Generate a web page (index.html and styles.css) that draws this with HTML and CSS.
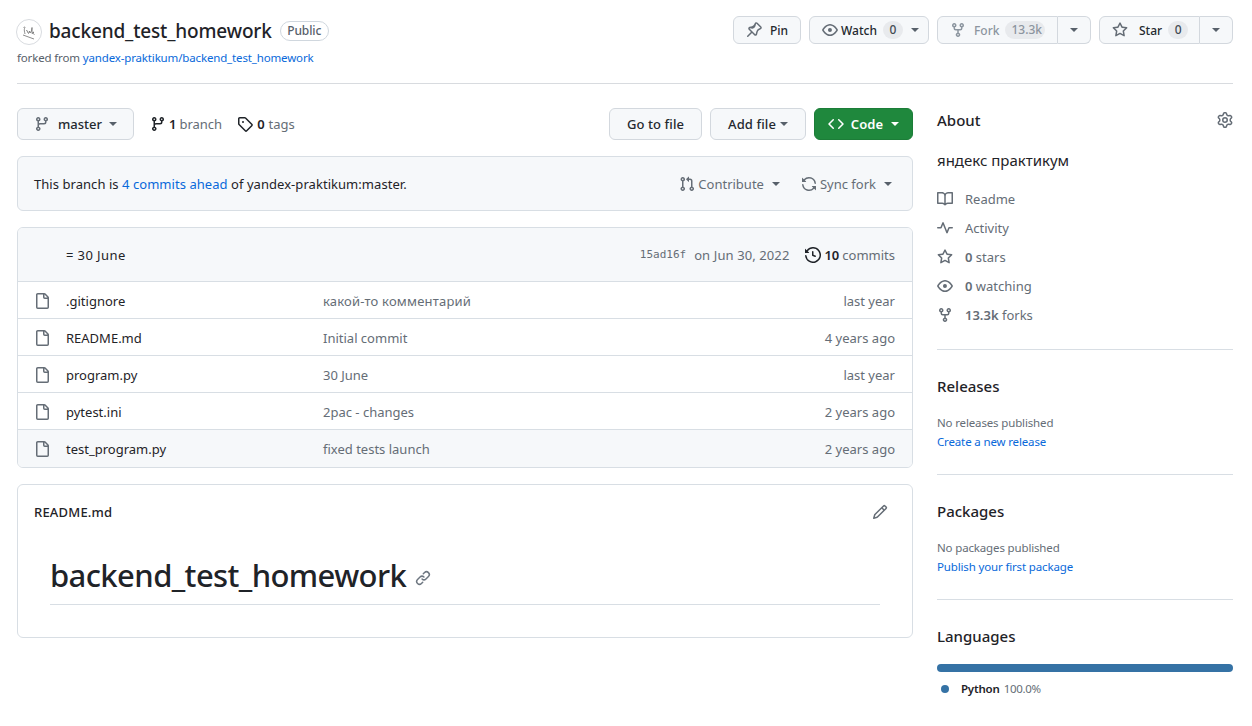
FILE: index.html
```html
<!DOCTYPE html>
<html lang="en">
<head>
    <meta charset="UTF-8">
    <meta name="viewport" content="width=device-width, initial-scale=1.0">
    <title>backend_test_homework</title>
    <link rel="stylesheet" href="styles.css">
</head>
<body>
    <!-- icon sprite -->
    <svg class="sprite" aria-hidden="true">
        <symbol id="i-fork" viewBox="0 0 16 16"><path d="M5 5.372v.878c0 .414.336.75.75.75h4.5a.75.75 0 0 0 .75-.75v-.878a2.25 2.25 0 1 1 1.5 0v.878a2.25 2.25 0 0 1-2.25 2.25h-1.5v2.128a2.251 2.251 0 1 1-1.5 0V8.5h-1.5A2.25 2.25 0 0 1 3.5 6.25v-.878a2.25 2.25 0 1 1 1.5 0ZM5 3.25a.75.75 0 1 0-1.5 0 .75.75 0 0 0 1.5 0Zm6.75.75a.75.75 0 1 0 0-1.5.75.75 0 0 0 0 1.5Zm-3 8.75a.75.75 0 1 0-1.5 0 .75.75 0 0 0 1.5 0Z"/></symbol>
        <symbol id="i-branch" viewBox="0 0 16 16"><path d="M9.5 3.25a2.25 2.25 0 1 1 3 2.122V6A2.5 2.5 0 0 1 10 8.5H6a1 1 0 0 0-1 1v1.128a2.251 2.251 0 1 1-1.5 0V5.372a2.25 2.25 0 1 1 1.5 0v1.836A2.493 2.493 0 0 1 6 7h4a1 1 0 0 0 1-1v-.628A2.25 2.25 0 0 1 9.5 3.25Zm-6 0a.75.75 0 1 0 1.5 0 .75.75 0 0 0-1.5 0Zm8.25-.75a.75.75 0 1 0 0 1.5.75.75 0 0 0 0-1.5ZM4.25 12a.75.75 0 1 0 0 1.5.75.75 0 0 0 0-1.5Z"/></symbol>
        <symbol id="i-tag" viewBox="0 0 16 16"><path d="M1 7.775V2.75C1 1.784 1.784 1 2.75 1h5.025c.464 0 .91.184 1.238.513l6.25 6.25a1.75 1.75 0 0 1 0 2.474l-5.026 5.026a1.75 1.75 0 0 1-2.474 0l-6.25-6.25A1.752 1.752 0 0 1 1 7.775Zm1.5 0c0 .066.026.13.073.177l6.25 6.25a.25.25 0 0 0 .354 0l5.025-5.025a.25.25 0 0 0 0-.354l-6.25-6.25a.25.25 0 0 0-.177-.073H2.75a.25.25 0 0 0-.25.25ZM6 5a1 1 0 1 1 0 2 1 1 0 0 1 0-2Z"/></symbol>
        <symbol id="i-pin" viewBox="0 0 16 16"><path d="M4.456.734a1.75 1.75 0 0 1 2.826.504l.613 1.327a3.08 3.08 0 0 0 2.084 1.707l2.454.584c1.332.317 1.8 1.972.832 2.94L11.06 10l3.72 3.72a.749.749 0 0 1-.326 1.275.749.749 0 0 1-.734-.215L10 11.06l-2.204 2.205c-.968.968-2.623.5-2.94-.832l-.584-2.454a3.08 3.08 0 0 0-1.707-2.084l-1.327-.613a1.75 1.75 0 0 1-.504-2.826L4.456.734ZM5.92 1.866a.25.25 0 0 0-.404-.072L1.794 5.516a.25.25 0 0 0 .072.404l1.328.613A4.582 4.582 0 0 1 5.73 9.63l.584 2.454a.25.25 0 0 0 .42.12l5.47-5.47a.25.25 0 0 0-.12-.42L9.63 6.73a4.583 4.583 0 0 1-3.098-2.537L5.92 1.866Z"/></symbol>
        <symbol id="i-eye" viewBox="0 0 16 16"><path d="M8 2c1.981 0 3.671.992 4.933 2.078 1.27 1.091 2.187 2.345 2.637 3.023a1.62 1.62 0 0 1 0 1.798c-.45.678-1.367 1.932-2.637 3.023C11.67 13.008 9.981 14 8 14c-1.981 0-3.671-.992-4.933-2.078C1.797 10.83.88 9.576.43 8.898a1.62 1.62 0 0 1 0-1.798c.45-.677 1.367-1.931 2.637-3.022C4.33 2.992 6.019 2 8 2ZM1.679 7.932a.12.12 0 0 0 0 .136c.411.622 1.241 1.75 2.366 2.717C5.176 11.758 6.527 12.5 8 12.5c1.473 0 2.825-.742 3.955-1.715 1.124-.967 1.954-2.096 2.366-2.717a.12.12 0 0 0 0-.136c-.412-.621-1.242-1.75-2.366-2.717C10.824 4.242 9.473 3.5 8 3.5c-1.473 0-2.825.742-3.955 1.715-1.124.967-1.954 2.096-2.366 2.717ZM8 10a2 2 0 1 1-.001-3.999A2 2 0 0 1 8 10Z"/></symbol>
        <symbol id="i-star" viewBox="0 0 16 16"><path d="M8 .25a.75.75 0 0 1 .673.418l1.882 3.815 4.21.612a.75.75 0 0 1 .416 1.279l-3.046 2.97.719 4.192a.751.751 0 0 1-1.088.791L8 12.347l-3.766 1.98a.75.75 0 0 1-1.088-.79l.72-4.194L.818 6.374a.75.75 0 0 1 .416-1.28l4.21-.611L7.327.668A.75.75 0 0 1 8 .25Zm0 2.445L6.615 5.5a.75.75 0 0 1-.564.41l-3.097.45 2.24 2.184a.75.75 0 0 1 .216.664l-.528 3.084 2.769-1.456a.75.75 0 0 1 .698 0l2.77 1.456-.53-3.084a.75.75 0 0 1 .216-.664l2.24-2.183-3.096-.45a.75.75 0 0 1-.564-.41L8 2.694Z"/></symbol>
        <symbol id="i-code" viewBox="0 0 16 16"><path d="m11.28 3.22 4.25 4.25a.75.75 0 0 1 0 1.06l-4.25 4.25a.749.749 0 0 1-1.275-.326.749.749 0 0 1 .215-.734L13.94 8l-3.72-3.72a.749.749 0 0 1 .326-1.275.749.749 0 0 1 .734.215Zm-6.56 0a.751.751 0 0 1 1.042.018.751.751 0 0 1 .018 1.042L2.06 8l3.72 3.72a.749.749 0 0 1-.326 1.275.749.749 0 0 1-.734-.215L.47 8.53a.75.75 0 0 1 0-1.06Z"/></symbol>
        <symbol id="i-pr" viewBox="0 0 16 16"><path d="M1.5 3.25a2.25 2.25 0 1 1 3 2.122v5.256a2.251 2.251 0 1 1-1.5 0V5.372A2.25 2.25 0 0 1 1.5 3.25Zm5.677-.177L9.573.677A.25.25 0 0 1 10 .854V2.5h1A2.5 2.5 0 0 1 13.5 5v5.628a2.251 2.251 0 1 1-1.5 0V5a1 1 0 0 0-1-1h-1v1.646a.25.25 0 0 1-.427.177L7.177 3.427a.25.25 0 0 1 0-.354ZM3.75 2.5a.75.75 0 1 0 0 1.5.75.75 0 0 0 0-1.5Zm0 9.5a.75.75 0 1 0 0 1.5.75.75 0 0 0 0-1.5Zm8.25.75a.75.75 0 1 0 1.5 0 .75.75 0 0 0-1.5 0Z"/></symbol>
        <symbol id="i-sync" viewBox="0 0 16 16"><path d="M1.705 8.005a.75.75 0 0 1 .834.656 5.5 5.5 0 0 0 9.592 2.97l-1.204-1.204a.25.25 0 0 1 .177-.427h3.646a.25.25 0 0 1 .25.25v3.646a.25.25 0 0 1-.427.177l-1.38-1.38A7.002 7.002 0 0 1 1.05 8.84a.75.75 0 0 1 .656-.834ZM8 2.5a5.487 5.487 0 0 0-4.131 1.869l1.204 1.204A.25.25 0 0 1 4.896 6H1.25A.25.25 0 0 1 1 5.75V2.104a.25.25 0 0 1 .427-.177l1.38 1.38A7.002 7.002 0 0 1 14.95 7.16a.75.75 0 0 1-1.49.178A5.5 5.5 0 0 0 8 2.5Z"/></symbol>
        <symbol id="i-history" viewBox="0 0 16 16"><path d="m.427 1.927 1.215 1.215a8.002 8.002 0 1 1-1.6 5.685.75.75 0 1 1 1.493-.154 6.5 6.5 0 1 0 1.18-4.458l1.358 1.358A.25.25 0 0 1 3.896 6H.25A.25.25 0 0 1 0 5.75V2.104a.25.25 0 0 1 .427-.177ZM7.75 4a.75.75 0 0 1 .75.75v2.992l2.028.812a.75.75 0 0 1-.557 1.392l-2.5-1A.751.751 0 0 1 7 8.25v-3.5A.75.75 0 0 1 7.75 4Z"/></symbol>
        <symbol id="i-file" viewBox="0 0 16 16"><path d="M2 1.75C2 .784 2.784 0 3.75 0h6.586c.464 0 .909.184 1.237.513l2.914 2.914c.329.328.513.773.513 1.237v9.586A1.75 1.75 0 0 1 13.25 16h-9.5A1.75 1.75 0 0 1 2 14.25Zm1.75-.25a.25.25 0 0 0-.25.25v12.5c0 .138.112.25.25.25h9.5a.25.25 0 0 0 .25-.25V6h-2.75A1.75 1.75 0 0 1 9 4.25V1.5Zm6.75.062V4.25c0 .138.112.25.25.25h2.688l-.011-.013-2.914-2.914-.013-.011Z"/></symbol>
        <symbol id="i-pencil" viewBox="0 0 16 16"><path d="M11.013 1.427a1.75 1.75 0 0 1 2.474 0l1.086 1.086a1.75 1.75 0 0 1 0 2.474l-8.61 8.61c-.21.21-.47.364-.756.445l-3.251.93a.75.75 0 0 1-.927-.928l.929-3.25c.081-.286.235-.547.445-.758l8.61-8.61Zm.176 4.823L9.75 4.81l-6.286 6.287a.253.253 0 0 0-.064.108l-.558 1.953 1.953-.558a.253.253 0 0 0 .108-.064Zm1.238-3.763a.25.25 0 0 0-.354 0L10.811 3.75l1.439 1.44 1.263-1.263a.25.25 0 0 0 0-.354Z"/></symbol>
        <symbol id="i-link" viewBox="0 0 16 16"><path d="m7.775 3.275 1.25-1.25a3.5 3.5 0 1 1 4.95 4.95l-2.5 2.5a3.5 3.5 0 0 1-4.95 0 .751.751 0 0 1 .018-1.042.751.751 0 0 1 1.042-.018 1.998 1.998 0 0 0 2.83 0l2.5-2.5a2.002 2.002 0 0 0-2.83-2.83l-1.25 1.25a.751.751 0 0 1-1.042-.018.751.751 0 0 1-.018-1.042Zm-4.69 9.64a1.998 1.998 0 0 0 2.83 0l1.25-1.25a.751.751 0 0 1 1.042.018.751.751 0 0 1 .018 1.042l-1.25 1.25a3.5 3.5 0 1 1-4.95-4.95l2.5-2.5a3.5 3.5 0 0 1 4.95 0 .751.751 0 0 1-.018 1.042.751.751 0 0 1-1.042.018 1.998 1.998 0 0 0-2.83 0l-2.5 2.5a1.998 1.998 0 0 0 0 2.83Z"/></symbol>
        <symbol id="i-gear" viewBox="0 0 16 16"><path d="M8 0a8.2 8.2 0 0 1 .701.031C9.444.095 9.99.645 10.16 1.29l.288 1.107c.018.066.079.158.212.224.231.114.454.243.668.386.123.082.233.09.299.071l1.103-.303c.644-.176 1.392.021 1.82.63.27.385.506.792.704 1.218.315.675.111 1.422-.364 1.891l-.814.806c-.049.048-.098.147-.088.294.016.257.016.515 0 .772-.01.147.038.246.088.294l.814.806c.475.469.679 1.216.364 1.891a7.977 7.977 0 0 1-.704 1.217c-.428.61-1.176.807-1.82.63l-1.102-.302c-.067-.019-.177-.011-.3.071a5.909 5.909 0 0 1-.668.386c-.133.066-.194.158-.211.224l-.29 1.106c-.168.646-.715 1.196-1.458 1.26a8.006 8.006 0 0 1-1.402 0c-.743-.064-1.289-.614-1.458-1.26l-.289-1.106c-.018-.066-.079-.158-.212-.224a5.738 5.738 0 0 1-.668-.386c-.123-.082-.233-.09-.299-.071l-1.103.303c-.644.176-1.392-.021-1.82-.63a8.12 8.12 0 0 1-.704-1.218c-.315-.675-.111-1.422.363-1.891l.815-.806c.05-.048.098-.147.088-.294a6.214 6.214 0 0 1 0-.772c.01-.147-.038-.246-.088-.294l-.815-.806C.635 6.045.431 5.298.746 4.623a7.92 7.92 0 0 1 .704-1.217c.428-.61 1.176-.807 1.82-.63l1.102.302c.067.019.177.011.3-.071.214-.143.437-.272.668-.386.133-.066.194-.158.211-.224l.29-1.106C6.009.645 6.556.095 7.299.03 7.53.01 7.764 0 8 0Zm-.571 1.525c-.036.003-.108.036-.137.146l-.289 1.105c-.147.561-.549.967-.998 1.189-.173.086-.34.183-.5.29-.417.278-.97.423-1.529.27l-1.103-.303c-.109-.03-.175.016-.195.045-.22.312-.412.644-.573.99-.014.031-.021.11.059.19l.815.806c.411.406.562.957.53 1.456a4.709 4.709 0 0 0 0 .582c.032.499-.119 1.05-.53 1.456l-.815.806c-.081.08-.073.159-.059.19.162.346.353.677.573.989.02.03.085.076.195.046l1.102-.303c.56-.153 1.113-.008 1.53.27.161.107.328.204.501.29.447.222.85.629.997 1.189l.289 1.105c.029.109.101.143.137.146a6.6 6.6 0 0 0 1.142 0c.036-.003.108-.036.137-.146l.289-1.105c.147-.561.549-.967.998-1.189.173-.086.34-.183.5-.29.417-.278.97-.423 1.529-.27l1.103.303c.109.029.175-.016.195-.045.22-.313.411-.644.573-.99.014-.031.021-.11-.059-.19l-.815-.806c-.411-.406-.562-.957-.53-1.456a4.709 4.709 0 0 0 0-.582c-.032-.499.119-1.05.53-1.456l.815-.806c.081-.08.073-.159.059-.19a6.464 6.464 0 0 0-.573-.989c-.02-.03-.085-.076-.195-.046l-1.102.303c-.56.153-1.113.008-1.53-.27a4.44 4.44 0 0 0-.501-.29c-.447-.222-.85-.629-.997-1.189l-.289-1.105c-.029-.11-.101-.143-.137-.146a6.6 6.6 0 0 0-1.142 0ZM11 8a3 3 0 1 1-6 0 3 3 0 0 1 6 0ZM9.5 8a1.5 1.5 0 1 0-3.001.001A1.5 1.5 0 0 0 9.5 8Z"/></symbol>
        <symbol id="i-book" viewBox="0 0 16 16"><path d="M0 1.75A.75.75 0 0 1 .75 1h4.253c1.227 0 2.317.59 3 1.501A3.743 3.743 0 0 1 11.006 1h4.245a.75.75 0 0 1 .75.75v10.5a.75.75 0 0 1-.75.75h-4.507a2.25 2.25 0 0 0-1.591.659l-.622.621a.75.75 0 0 1-1.06 0l-.622-.621A2.25 2.25 0 0 0 5.258 13H.75a.75.75 0 0 1-.75-.75Zm7.251 10.324.004-5.073-.002-2.253A2.25 2.25 0 0 0 5.003 2.5H1.5v9h3.757a3.75 3.75 0 0 1 1.994.574ZM8.755 4.75l-.004 7.322a3.752 3.752 0 0 1 1.992-.572H14.5v-9h-3.495a2.25 2.25 0 0 0-2.25 2.25Z"/></symbol>
        <symbol id="i-pulse" viewBox="0 0 16 16"><path d="M6 2c.306 0 .582.187.696.471L10 10.731l1.304-3.26A.751.751 0 0 1 12 7h3.25a.75.75 0 0 1 0 1.5h-2.742l-1.812 4.528a.751.751 0 0 1-1.392 0L6 4.77 4.696 8.03A.75.75 0 0 1 4 8.5H.75a.75.75 0 0 1 0-1.5h2.742l1.812-4.529A.751.751 0 0 1 6 2Z"/></symbol>
    </svg>

    <header class="repo-head">
        <div class="repo-title">
            <div class="title-row">
                <svg class="avatar" viewBox="0 0 26 26">
                    <circle cx="13" cy="13" r="12.5" fill="#fff" stroke="#d8dbdf"/>
                    <path d="M7.5 8.5c1-1 2-.5 1 1-.5 1.500 0 3.500.5 5.500M10 12c1-1 1.500-.5 1.500 1l1 1.500 1-2.500.5 2 1.500-2 .5-3.500v6l2-1.500-1.500 1 2 1.500M7 16l11 4" fill="none" stroke="#707070" stroke-width=".8"/>
                </svg>
                <a class="repo-name" href="#">backend_test_homework</a>
                <span class="label">Public</span>
            </div>
            <p class="forked">forked from <a href="#">yandex-praktikum/backend_test_homework</a></p>
        </div>
        <div class="repo-actions">
            <button class="btn btn-sm btn-pin"><svg class="ic"><use href="#i-pin"/></svg>Pin</button>
            <button class="btn btn-sm btn-watch"><svg class="ic"><use href="#i-eye"/></svg>Watch<span class="counter">0</span><i class="caret"></i></button>
            <div class="split split-fork">
                <button class="btn btn-sm btn-main disabled"><svg class="ic"><use href="#i-fork"/></svg>Fork<span class="counter">13.3k</span></button>
                <button class="btn btn-sm btn-more"><i class="caret"></i></button>
            </div>
            <div class="split split-star">
                <button class="btn btn-sm btn-main"><svg class="ic"><use href="#i-star"/></svg>Star<span class="counter">0</span></button>
                <button class="btn btn-sm btn-more"><i class="caret"></i></button>
            </div>
        </div>
    </header>

    <div class="layout">
        <main class="main-col">
            <div class="nav-row">
                <button class="btn btn-branch"><svg class="ic"><use href="#i-branch"/></svg>master<i class="caret"></i></button>
                <a class="nav-link nav-branch" href="#"><svg class="ic"><use href="#i-branch"/></svg><b>1</b> branch</a>
                <a class="nav-link nav-tags" href="#"><svg class="ic"><use href="#i-tag"/></svg><b>0</b> tags</a>
                <div class="nav-actions">
                    <button class="btn btn-goto">Go to file</button>
                    <button class="btn btn-add">Add file<i class="caret"></i></button>
                    <button class="btn btn-code"><svg class="ic"><use href="#i-code"/></svg>Code<i class="caret"></i></button>
                </div>
            </div>

            <div class="fork-banner">
                <span class="banner-text">This branch is <a href="#">4 commits ahead</a> of yandex-praktikum:master.</span>
                <div class="banner-actions">
                    <span class="banner-act"><svg class="ic"><use href="#i-pr"/></svg>Contribute<i class="caret"></i></span>
                    <span class="banner-act"><svg class="ic"><use href="#i-sync"/></svg>Sync fork<i class="caret"></i></span>
                </div>
            </div>

            <div class="files">
                <div class="commit-row">
                    <span class="commit-msg">= 30 June</span>
                    <span class="commit-meta">
                        <code class="sha">15ad16f</code>
                        <span class="commit-date">on Jun 30, 2022</span>
                        <span class="commit-count"><svg class="ic"><use href="#i-history"/></svg><b>10</b> commits</span>
                    </span>
                </div>
                <div class="file-row"><svg class="ic"><use href="#i-file"/></svg><a class="fname" href="#">.gitignore</a><span class="fmsg fmsg-ru">какой-то комментарий</span><span class="fage">last year</span></div>
                <div class="file-row"><svg class="ic"><use href="#i-file"/></svg><a class="fname" href="#">README.md</a><span class="fmsg">Initial commit</span><span class="fage">4 years ago</span></div>
                <div class="file-row"><svg class="ic"><use href="#i-file"/></svg><a class="fname" href="#">program.py</a><span class="fmsg">30 June</span><span class="fage">last year</span></div>
                <div class="file-row"><svg class="ic"><use href="#i-file"/></svg><a class="fname" href="#">pytest.ini</a><span class="fmsg">2pac - changes</span><span class="fage">2 years ago</span></div>
                <div class="file-row hover"><svg class="ic"><use href="#i-file"/></svg><a class="fname" href="#">test_program.py</a><span class="fmsg">fixed tests launch</span><span class="fage">2 years ago</span></div>
            </div>

            <div class="readme">
                <div class="readme-head">
                    <span>README.md</span>
                    <svg class="ic"><use href="#i-pencil"/></svg>
                </div>
                <div class="readme-body">
                    <h1>backend_test_homework<svg class="ic"><use href="#i-link"/></svg></h1>
                </div>
            </div>
        </main>

        <aside class="side-col">
            <section class="side-block about">
                <div class="about-head">
                    <h2>About</h2>
                    <svg class="ic"><use href="#i-gear"/></svg>
                </div>
                <p class="about-desc">яндекс практикум</p>
                <ul class="about-list">
                    <li><svg class="ic"><use href="#i-book"/></svg>Readme</li>
                    <li><svg class="ic"><use href="#i-pulse"/></svg>Activity</li>
                    <li><svg class="ic"><use href="#i-star"/></svg><b>0</b>&nbsp;stars</li>
                    <li><svg class="ic"><use href="#i-eye"/></svg><b>0</b>&nbsp;watching</li>
                    <li><svg class="ic"><use href="#i-fork"/></svg><b>13.3k</b>&nbsp;forks</li>
                </ul>
            </section>
            <section class="side-block">
                <h2>Releases</h2>
                <p class="side-note">No releases published</p>
                <a class="side-link" href="#">Create a new release</a>
            </section>
            <section class="side-block">
                <h2>Packages</h2>
                <p class="side-note">No packages published</p>
                <a class="side-link" href="#">Publish your first package</a>
            </section>
            <section class="side-block lang">
                <h2>Languages</h2>
                <div class="lang-bar"></div>
                <div class="lang-item"><i class="lang-dot"></i><b>Python</b><span>100.0%</span></div>
            </section>
        </aside>
    </div>
</body>
</html>
```

FILE: styles.css
```css
* {
    box-sizing: border-box;
}
body {
    margin: 0;
    padding: 0 19px 0 17px;
    background: #fff;
    color: #1f2328;
    font-family: "Noto Sans", "Open Sans", sans-serif;
    font-size: 13px;
    overflow: hidden;
}
a {
    color: #0969da;
    text-decoration: none;
}
p, h1, h2, ul {
    margin: 0;
    padding: 0;
}
b {
    font-weight: 600;
}
.sprite {
    display: none;
}
.ic {
    width: 16px;
    height: 16px;
    fill: #656d76;
    flex: none;
}
button {
    font-family: inherit;
}

/* buttons */
.btn {
    display: flex;
    align-items: center;
    height: 32px;
    padding: 0 16px;
    background: #f6f8fa;
    border: 1px solid #d3d8de;
    border-radius: 6px;
    color: #24292f;
    font-size: 13px;
    font-weight: 500;
}
.btn-sm {
    height: 28px;
    font-size: 12px;
}
.caret {
    display: inline-block;
    width: 0;
    height: 0;
    margin-left: 8px;
    border-top: 4px solid #57606a;
    border-left: 4px solid transparent;
    border-right: 4px solid transparent;
}
.counter {
    min-width: 20px;
    padding: 0 6px;
    margin-left: 6px;
    height: 18px;
    line-height: 18px;
    background: #e8eaed;
    border-radius: 10px;
    font-size: 12px;
    text-align: center;
    color: #424a53;
}

/* header */
.repo-head {
    display: flex;
    justify-content: space-between;
    height: 84px;
    padding-top: 16px;
    border-bottom: 1px solid #d8dbdf;
}
.title-row {
    display: flex;
    align-items: center;
    height: 30px;
}
.avatar {
    width: 26px;
    height: 26px;
    margin: 2px 7px 0 -1px;
}
.repo-name {
    color: #1f2328;
    font-size: 19px;
    font-weight: 500;
    letter-spacing: -0.16px;
}
.label {
    margin-left: 8px;
    padding: 0 6.5px;
    height: 20px;
    line-height: 18px;
    border: 1px solid #d0d7de;
    border-radius: 10px;
    font-size: 12px;
    font-weight: 500;
    letter-spacing: -0.1px;
    color: #57606a;
}
.forked {
    margin-top: 4px;
    font-size: 11.5px;
    color: #57606a;
    letter-spacing: -0.15px;
}
.repo-actions {
    display: flex;
    gap: 8px;
    align-items: flex-start;
}
.repo-actions .ic {
    margin-right: 8px;
}
.btn-pin {
    width: 68px;
    padding: 0 12px;
}
.btn-pin .ic {
    transform: scaleX(-1);
}
.btn-watch {
    width: 120px;
    padding: 0 12px;
}
.btn-watch .ic {
    margin-right: 3px;
}
.btn-watch .caret {
    margin-left: 8px;
}
.split {
    display: flex;
}
.split .btn-main {
    border-radius: 6px 0 0 6px;
    padding: 0 12px;
}
.split .btn-more {
    border-left: 0;
    border-radius: 0 6px 6px 0;
    padding: 0;
    justify-content: center;
}
.split .caret {
    margin: 0;
}
.split-fork .btn-main {
    width: 121px;
}
.split-fork .btn-more {
    width: 33px;
}
.split-star .btn-main {
    width: 101px;
}
.split-star .btn-main .ic {
    margin-right: 11px;
}
.split-star .btn-more {
    width: 33px;
}
.disabled {
    color: #8c959f;
}
.disabled .ic {
    fill: #8c959f;
}
.disabled .counter {
    color: #8c959f;
}

/* two columns */
.layout {
    display: flex;
    gap: 24px;
    padding-top: 24px;
}
.main-col {
    width: 896px;
    flex: none;
}
.side-col {
    width: 296px;
    flex: none;
}

/* branch row */
.nav-row {
    display: flex;
    align-items: center;
    height: 32px;
}
.btn-branch {
    width: 117px;
    padding: 0 16px;
}
.btn-branch .ic {
    margin-right: 8px;
}
.btn-branch .caret {
    margin-left: 7px;
}
.nav-link {
    display: flex;
    align-items: center;
    color: #656d76;
    margin-left: 16px;
}
.nav-link b {
    color: #1f2328;
    margin-right: 3px;
}
.nav-link .ic {
    fill: #1f2328;
    margin-right: 3px;
}
.nav-tags {
    margin-left: 15px;
}
.nav-tags .ic {
    margin-right: 4px;
}
.nav-tags b {
    margin-right: 4px;
}
.nav-actions {
    display: flex;
    gap: 8px;
    margin-left: auto;
}
.nav-actions .btn {
    letter-spacing: 0.1px;
}
.btn-goto {
    width: 93px;
    justify-content: center;
    padding: 0;
}
.btn-add {
    width: 96px;
    justify-content: center;
    padding: 0;
}
.btn-add .caret {
    margin-left: 4px;
}
.btn-code {
    width: 99px;
    justify-content: center;
    padding: 0;
    background: #1f883d;
    border-color: #1c7d38;
    color: #fff;
    font-weight: 600;
}
.btn-code .ic {
    fill: #fff;
    margin-right: 7px;
}
.btn-code .caret {
    border-top-color: #fff;
}

/* fork banner */
.fork-banner {
    display: flex;
    justify-content: space-between;
    align-items: center;
    height: 55px;
    margin-top: 16px;
    padding: 0 20px 0 16px;
    background: #f6f8fa;
    border: 1px solid #d8dee4;
    border-radius: 6px;
}
.banner-text {
    letter-spacing: 0.05px;
}
.banner-actions {
    display: flex;
    gap: 21px;
}
.banner-act {
    display: flex;
    align-items: center;
    color: #656d76;
}
.banner-act .ic {
    margin-right: 3px;
}

/* file table */
.files {
    margin-top: 16px;
    border: 1px solid #d8dee4;
    border-radius: 6px;
    overflow: hidden;
}
.commit-row {
    display: flex;
    justify-content: space-between;
    align-items: center;
    height: 53px;
    padding: 0 17px 0 48px;
    background: #f6f8fa;
}
.commit-msg {
    letter-spacing: 0.4px;
}
.commit-meta {
    display: flex;
    align-items: center;
    color: #656d76;
}
.sha {
    font-family: "DejaVu Sans Mono", "Liberation Mono", monospace;
    font-size: 11px;
    margin-right: 8px;
}
.commit-date {
    letter-spacing: 0.1px;
}
.commit-count {
    display: flex;
    align-items: center;
    margin-left: 16px;
}
.commit-count .ic {
    fill: #1f2328;
    margin-right: 3px;
}
.commit-count b {
    color: #1f2328;
    margin-right: 3px;
}
.file-row {
    display: flex;
    align-items: center;
    height: 37px;
    padding: 1px 17px 0 16px;
    border-top: 1px solid #d8dee4;
}
.file-row .ic {
    margin-right: 16px;
}
.file-row.hover {
    height: 38px;
    background: #f6f8fa;
}
.fname {
    width: 257px;
    flex: none;
    color: #1f2328;
}
.fmsg {
    color: #656d76;
    flex: 1;
}
.fmsg-ru {
    letter-spacing: 0.2px;
}
.fage {
    color: #656d76;
}

/* readme */
.readme {
    margin-top: 16px;
    border: 1px solid #d8dee4;
    border-radius: 6px;
}
.readme-head {
    display: flex;
    justify-content: space-between;
    align-items: center;
    height: 54px;
    padding: 0 24px 0 16px;
    font-size: 13px;
    font-weight: 500;
    letter-spacing: 0.2px;
}
.readme-body {
    padding: 0 32px 32px;
}
h1 {
    display: flex;
    align-items: center;
    height: 66px;
    padding-top: 6px;
    border-bottom: 1px solid #d8dee4;
    font-size: 31px;
    font-weight: 500;
    letter-spacing: -0.6px;
}
h1 .ic {
    margin: 6px 0 0 9px;
    fill: #6e7781;
}

/* sidebar */
.side-block {
    padding: 0 0 24px;
    margin-bottom: 24px;
    border-bottom: 1px solid #d8dee4;
    height: 101px;
}
h2 {
    font-size: 15px;
    font-weight: 500;
    line-height: 24px;
}
.about {
    height: 242px;
}
.about-head {
    display: flex;
    justify-content: space-between;
    align-items: center;
}
.about-desc {
    margin-top: 16px;
    font-size: 15px;
    line-height: 24px;
}
.about-list {
    list-style: none;
    margin-top: 12px;
}
.about-list li {
    display: flex;
    align-items: center;
    height: 29px;
    color: #656d76;
}
.about-list .ic {
    margin-right: 12px;
}
.about-list b {
    font-weight: 600;
}
.side-note {
    margin-top: 16px;
    font-size: 11.5px;
    line-height: 18px;
    letter-spacing: -0.15px;
    color: #656d76;
}
.side-link {
    font-size: 11.5px;
    line-height: 18px;
    letter-spacing: -0.15px;
}
.lang {
    border-bottom: 0;
    height: auto;
    margin-bottom: 0;
}
.lang-bar {
    height: 8px;
    margin-top: 16px;
    background: #3572a5;
    border-radius: 6px;
}
.lang-item {
    display: flex;
    align-items: center;
    margin-top: 9px;
    font-size: 11.5px;
}
.lang-dot {
    width: 8px;
    height: 8px;
    margin: 0 12px 0 4px;
    border-radius: 50%;
    background: #3572a5;
}
.lang-item b {
    letter-spacing: -0.2px;
}
.lang-item span {
    margin-left: 4px;
    letter-spacing: -0.3px;
    color: #656d76;
}
```
